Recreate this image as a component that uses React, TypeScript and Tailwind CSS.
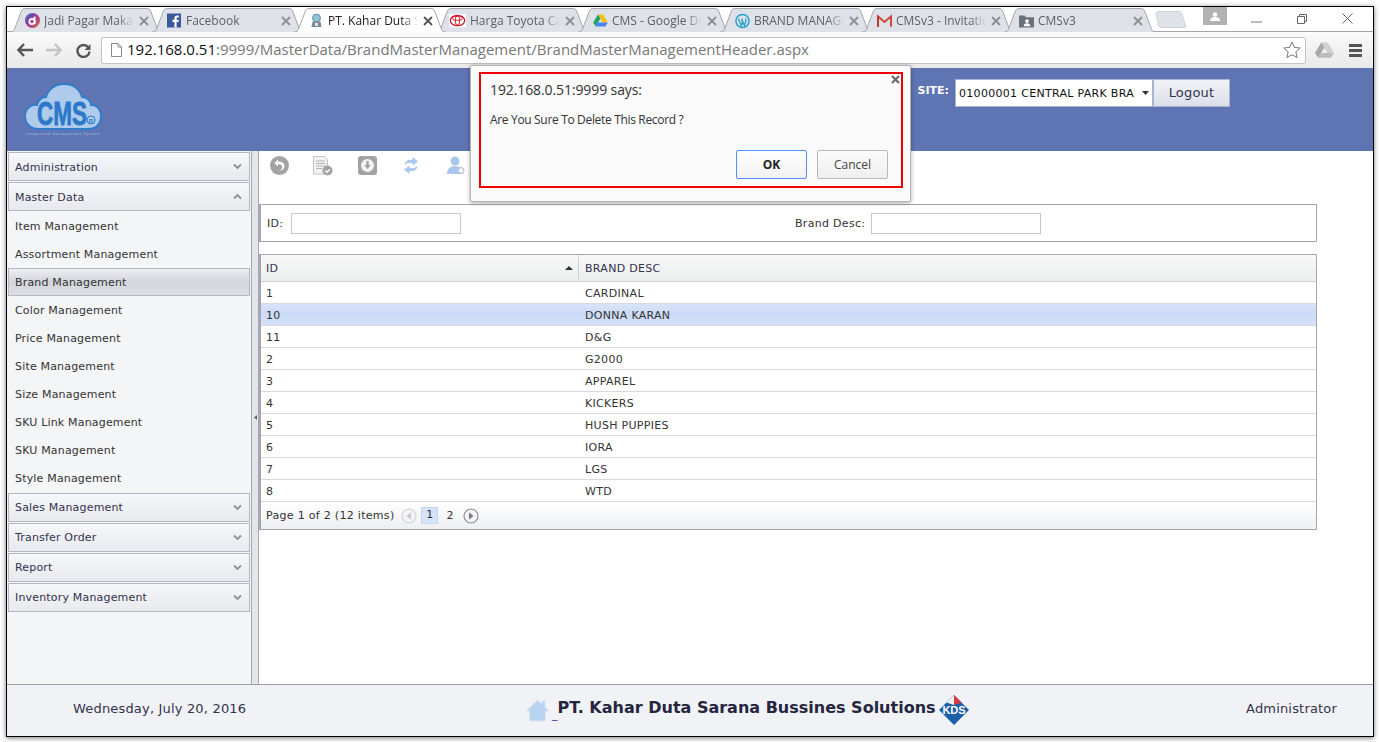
import type React from 'react'

const tabs = [
	{ title: 'Jadi Pagar Makan', icon: 'd' },
	{ title: 'Facebook', icon: 'fb' },
	{ title: 'PT. Kahar Duta Sarana', icon: 'pt', active: true },
	{ title: 'Harga Toyota Calya', icon: 'toyota' },
	{ title: 'CMS - Google Drive', icon: 'drive' },
	{ title: 'BRAND MANAGEMENT', icon: 'wp' },
	{ title: 'CMSv3 - Invitation', icon: 'gmail' },
	{ title: 'CMSv3', icon: 'folder' },
]

const rows = [
	['1', 'CARDINAL'],
	['10', 'DONNA KARAN'],
	['11', 'D&G'],
	['2', 'G2000'],
	['3', 'APPAREL'],
	['4', 'KICKERS'],
	['5', 'HUSH PUPPIES'],
	['6', 'IORA'],
	['7', 'LGS'],
	['8', 'WTD'],
]

const masterItems = [
	'Item Management',
	'Assortment Management',
	'Brand Management',
	'Color Management',
	'Price Management',
	'Site Management',
	'Size Management',
	'SKU Link Management',
	'SKU Management',
	'Style Management',
]

const TabIcon = ({ name }: { name: string }) => {
	if (name === 'd') {
		return (
			<svg width="15" height="15" viewBox="0 0 15 15">
				<defs>
					<linearGradient id="dg" x1="0" y1="0" x2="1" y2="1">
						<stop offset="0" stopColor="#2f6fd0" />
						<stop offset="0.5" stopColor="#a0359a" />
						<stop offset="1" stopColor="#e8702a" />
					</linearGradient>
				</defs>
				<circle cx="7.5" cy="7.5" r="7.5" fill="url(#dg)" />
				<circle cx="7" cy="8.5" r="2.6" fill="none" stroke="#fff" strokeWidth="1.8" />
				<path d="M9.6 3.5v7.5" stroke="#fff" strokeWidth="1.8" />
			</svg>
		)
	}
	if (name === 'fb') {
		return (
			<svg width="15" height="15" viewBox="0 0 15 15">
				<rect width="14" height="14" y="0.5" fill="#3b5998" />
				<path d="M9.6 14.5V9h1.9l.3-2.2H9.6V5.5c0-.7.2-1 1-1h1.2V2.6c-.3 0-.9-.1-1.600-.1-1.700 0-2.800 1-2.800 2.800v1.500H5.500V9h1.900v5.500z" fill="#fff" />
			</svg>
		)
	}
	if (name === 'pt') {
		return (
			<svg width="15" height="15" viewBox="0 0 15 15">
				<circle cx="7.500" cy="5" r="4" fill="#8fc4d8" stroke="#5b7f92" strokeWidth="0.8" />
				<path d="M3.500 8.500h8l1 5.500h-10z" fill="#7b8a94" />
				<path d="M6 10h3v3H6z" fill="#dfe9ee" />
			</svg>
		)
	}
	if (name === 'toyota') {
		return (
			<svg width="19" height="15" viewBox="0 0 19 15" className="-ml-[2px]">
				<rect width="19" height="15" fill="#fff" />
				<ellipse cx="9.500" cy="7.500" rx="8" ry="5.800" fill="none" stroke="#d8121f" strokeWidth="1.400" />
				<ellipse cx="9.500" cy="7.500" rx="2.400" ry="5.200" fill="none" stroke="#d8121f" strokeWidth="1.100" />
				<ellipse cx="9.500" cy="5" rx="5.500" ry="2.300" fill="none" stroke="#d8121f" strokeWidth="1.100" />
			</svg>
		)
	}
	if (name === 'drive') {
		return (
			<svg width="16" height="15" viewBox="0 0 16 15">
				<path d="M5.300 1h5.400l5.100 8.700h-5.400z" fill="#f4c20d" />
				<path d="M5.300 1 .2 9.700 2.800 14l5.100-8.700z" fill="#1ea362" />
				<path d="M2.800 14h10.400l2.600-4.300H5.400z" fill="#4285f4" />
			</svg>
		)
	}
	if (name === 'wp') {
		return (
			<svg width="16" height="16" viewBox="0 0 16 16">
				<circle cx="8" cy="8" r="7" fill="none" stroke="#21a0c9" strokeWidth="1.500" />
				<path d="M3.600 5.500 6.700 13l1.300-4-1-3M7 5.500 10 13l1.700-5.200c.4-1.200-.1-2-.6-2.500" fill="none" stroke="#21a0c9" strokeWidth="1.400" />
			</svg>
		)
	}
	if (name === 'gmail') {
		return (
			<svg width="16" height="14" viewBox="0 0 16 14">
				<path d="M1 13V2l7 6 7-6v11" fill="none" stroke="#d1453b" strokeWidth="2.200" />
				<path d="M1 13V2" stroke="#b83a30" strokeWidth="2.200" />
			</svg>
		)
	}
	return (
		<svg width="16" height="14" viewBox="0 0 16 14">
			<path d="M0 1h6l1.500 2H16v11H0z" fill="#6b7079" />
			<circle cx="8.500" cy="7" r="2" fill="#fff" />
			<path d="M5 12.500c0-2.200 1.500-3 3.500-3s3.500.8 3.500 3z" fill="#fff" />
		</svg>
	)
}

const Tab = ({ title, icon, active }: { title: string; icon: string; active?: boolean }) => (
	<div className={`relative -mr-[10px] flex h-[24px] w-[152px] shrink-0 items-center pl-[15px] pt-[1px] ${active ? 'z-10' : ''}`}>
		<svg className="absolute inset-0 h-full w-full" viewBox="0 0 152 24" preserveAspectRatio="none">
			<path
				d="M0 24C3 24 4 23 5 20L11 4C12 1 13 .5 16 .5H136C139 .5 140 1 141 4L147 20C148 23 149 24 152 24"
				fill={active ? '#ffffff' : '#dee1e7'}
				stroke="#a4a6ab"
				strokeWidth="1"
			/>
		</svg>
		<span className="relative flex w-[15px] items-center justify-center">
			<TabIcon name={icon} />
		</span>
		<span className={`relative ml-[4px] w-[90px] overflow-hidden whitespace-nowrap text-[12px] [mask-image:linear-gradient(to_right,black_82%,transparent)] ${active ? 'text-[#222]' : 'text-[#5c5f66]'}`}>
			{title}
		</span>
		<svg className="relative ml-[5px]" width="10" height="10" viewBox="0 0 10 10">
			<path d="M1 1l8 8M9 1L1 9" stroke={active ? '#555' : '#8b8d92'} strokeWidth="1.800" />
		</svg>
	</div>
)

const Chevron = ({ up }: { up?: boolean }) => (
	<svg width="9" height="7" viewBox="0 0 9 7">
		<path d={up ? 'M1 5.500l3.500-3.500L8 5.500' : 'M1 1.500l3.500 3.500L8 1.500'} fill="none" stroke="#8d9098" strokeWidth="1.800" />
	</svg>
)

const MenuHeader = ({ label, up, low }: { label: string; up?: boolean; low?: boolean }) => (
	<div className="flex h-[29px] items-center justify-between border border-[#b5b7c0] bg-gradient-to-b from-[#f6f7f9] to-[#e7e9ee] pl-[6px] pr-[7px] text-[#33334d]">
		<span className={low ? 'pt-[1px]' : 'pt-[3px]'}>{label}</span>
		<Chevron up={up} />
	</div>
)

const ToolIcons = () => (
	<div className="flex h-[53px] items-start gap-[24px] pl-[11px] pt-[5px]">
		<svg width="19" height="19" viewBox="0 0 19 19">
			<circle cx="9.500" cy="9.500" r="9.500" fill="#a3a3a5" />
			<path d="M8 3.500 4.500 7 8 10.500V8c2.500 0 4.200.8 4 3.500-.1 1.500-1 2.500-2.500 3.500 3.300-.5 5-2.500 5-5 0-3-2.500-4.500-6.500-4.500z" fill="#fff" />
		</svg>
		<svg width="20" height="20" viewBox="0 0 20 20">
			<path d="M.5.500h11l3 3V18H.5z" fill="#f2f2f3" stroke="#c2c2c5" />
			<path d="M3 5h9M3 7.500h9M3 10h9M3 12.500h6" stroke="#b4b4b8" />
			<circle cx="14.500" cy="14.500" r="5" fill="#a3a3a5" />
			<path d="M12.300 14.500l1.700 1.700 2.800-3" fill="none" stroke="#fff" strokeWidth="1.300" />
		</svg>
		<svg width="19" height="19" viewBox="0 0 19 19" className="ml-[1px]">
			<rect width="19" height="19" rx="3" fill="#a3a3a5" />
			<circle cx="9.500" cy="9.500" r="6.500" fill="#f4f4f4" />
			<path d="M8.300 5h2.400v4h2l-3.200 4-3.200-4h2z" fill="#a3a3a5" />
		</svg>
		<svg width="16" height="19" viewBox="0 0 16 19" className="ml-[2px]">
			<path d="M1.500 9C2 5 5 3 9.500 3.800V1l5.500 4.500L9.500 9.500V7C6.500 6.500 4 7 1.500 9z" fill="#a9c8ee" />
			<path d="M14.500 10c-.5 4-3.500 6-8 5.200V18L1 13.500 6.500 9.500V12c3 .5 5.500 0 8-2z" fill="#a9c8ee" />
		</svg>
		<svg width="18" height="19" viewBox="0 0 18 19" className="ml-[4px]">
			<circle cx="8" cy="5" r="4.500" fill="#a9c8ee" />
			<path d="M0 18c0-5 3-8 8-8s8 3 8 8z" fill="#a9c8ee" />
			<circle cx="14" cy="14.500" r="3" fill="#f1f4f9" stroke="#a9b6c8" />
		</svg>
	</div>
)

const AlertDialog = () => (
	<div className="absolute left-[463px] top-[58px] z-20 h-[137px] w-[441px] rounded-[2px] border border-[#b5b5b5] bg-[#fafafa] pb-[13px] pl-[8px] pr-[7px] pt-[6px] font-['Open_Sans',sans-serif] shadow-[0_1px_4px_rgba(0,0,0,0.35)]">
		<div className="relative h-[116px] border-2 border-[#ee0000] pl-[9px] pr-[13px] pt-[6px]">
			<svg className="absolute right-[1px] top-[1px]" width="9" height="9" viewBox="0 0 9 9">
				<path d="M1 1l7 7M8 1L1 8" stroke="#666" strokeWidth="2" />
			</svg>
			<p className="text-[14px] leading-[20px] tracking-[-0.1px] text-[#333]">192.168.0.51:9999 says:</p>
			<p className="mt-[11px] text-[12px] leading-[18px] tracking-[-0.33px] text-[#333]">Are You Sure To Delete This Record ?</p>
			<div className="mt-[21px] flex justify-end gap-[10px]">
				<button className="h-[29px] w-[71px] rounded-[2px] border border-[#4d90fe] bg-gradient-to-b from-[#ffffff] to-[#f1f1f1] text-[12px] font-bold text-[#222]">OK</button>
				<button className="h-[29px] w-[71px] rounded-[2px] border border-[#b8b8b8] bg-gradient-to-b from-[#fbfbfb] to-[#efefef] text-[12px] text-[#444]">Cancel</button>
			</div>
		</div>
	</div>
)

const CmsLogo = () => (
	<svg width="78" height="56" viewBox="0 0 78 56">
		<path
			d="M14 46C5 46 0 40 0 33 0 26 6 21 12 22 13 17 17 14 21 14 23 6 31 1 39 1 48 1 55 6 57 14 62 14 66 18 66 22 72 21 76 27 76 33 76 41 71 46 63 46Z"
			fill="#aecbec"
			stroke="#2f7ccb"
			strokeWidth="2"
		/>
		<text x="37" y="42" textAnchor="middle" fontFamily="Liberation Sans" fontWeight="700" fontSize="34" fill="#2c78c9" textLength="50" lengthAdjust="spacingAndGlyphs" stroke="#2c78c9" strokeWidth="0.8">
			CMS
		</text>
		<circle cx="66" cy="37" r="4" fill="none" stroke="#2c78c9" strokeWidth="1" />
		<text x="66" y="39.500" textAnchor="middle" fontFamily="Liberation Sans" fontWeight="700" fontSize="6" fill="#2c78c9">R</text>
		<text x="38" y="52" textAnchor="middle" fontFamily="DejaVu Sans" fontSize="3.500" fill="#9fc0ea" textLength="74">
			Integrated Management System
		</text>
	</svg>
)

const App: React.FC = () => {
	return (
		<div className="h-[742px] w-[1380px] overflow-hidden bg-white pl-[6px] pt-[6px] font-['DejaVu_Sans',sans-serif] text-[11px]">
			<div className="relative flex h-[731px] w-[1368px] flex-col border border-black bg-white shadow-[0_1px_5px_rgba(0,0,0,0.55)]">
				{/* tab strip */}
				<div className="flex h-[25px] shrink-0 items-end border-b border-[#a4a6ab] pl-[3px] font-['Open_Sans',sans-serif]">
					<div className="-mb-[1px] flex items-end">
						{tabs.map((tab) => (
							<Tab key={tab.title} title={tab.title} icon={tab.icon} active={tab.active} />
						))}
					</div>
					<svg className="mb-[3px] ml-[9px]" width="32" height="17" viewBox="0 0 32 17">
						<path d="M1 3C1 1 2 .5 4 .5H23C25 .5 26 1 27 3L31 16.500H7C5 16.500 4 16 3.500 14z" fill="#dfe3e9" stroke="#cfd2d7" />
					</svg>
					<div className="mb-[6px] ml-[16px] flex h-[18px] w-[24px] items-center justify-center self-start bg-[#b2b2b2]">
						<svg width="10" height="9" viewBox="0 0 10 9">
							<circle cx="5" cy="2.500" r="2.200" fill="#fff" />
							<path d="M0 9c0-3 2-4 5-4s5 1 5 4z" fill="#fff" />
						</svg>
					</div>
					<div className="mb-[1px] ml-[11px] flex flex-1 items-center self-stretch">
						<svg className="ml-[13px]" width="11" height="11" viewBox="0 0 11 11">
							<path d="M0 9h11" stroke="#777" />
						</svg>
						<svg className="ml-[35px]" width="10" height="10" viewBox="0 0 10 10">
							<path d="M.5 2.500h7v7h-7zM2.500 2.500V.5h7v7h-2" fill="none" stroke="#666" />
						</svg>
						<svg className="ml-[35px]" width="11" height="11" viewBox="0 0 11 11">
							<path d="M.5.500l10 10M10.500.5l-10 10" stroke="#666" />
						</svg>
					</div>
				</div>

				{/* browser toolbar */}
				<div className="flex h-[36px] shrink-0 items-center bg-gradient-to-b from-[#fbfbfb] to-[#e9e9e9] pl-[10px]">
					<svg width="16" height="14" viewBox="0 0 16 14">
						<path d="M7 1 1.500 7 7 13M2 7h14" fill="none" stroke="#555" strokeWidth="2.400" />
					</svg>
					<svg className="ml-[13px]" width="16" height="14" viewBox="0 0 16 14">
						<path d="M9 1l5.500 6L9 13M14 7H0" fill="none" stroke="#c3c3c3" strokeWidth="2.400" />
					</svg>
					<svg className="ml-[14px]" width="15" height="15" viewBox="0 0 15 15">
						<path d="M12.300 4.300A6 6 0 1 0 13.500 8.500" fill="none" stroke="#555" strokeWidth="2.400" />
						<path d="M14.500 1v6h-6z" fill="#555" />
					</svg>
					<div className="ml-[10px] flex h-[27px] w-[1205px] items-center rounded-[2px] border border-[#c4c4c4] bg-white pl-[9px] pr-[4px] font-['Open_Sans',sans-serif] text-[15px]">
						<svg width="11" height="14" viewBox="0 0 11 14">
							<path d="M.5.500h6.500l3.500 3.500v9.500H.5zM7 .5V4h3.500" fill="#fff" stroke="#8a8a8a" />
						</svg>
						<span className="-mt-[1px] ml-[5px] whitespace-nowrap text-[#777]">
							<span className="text-[#111]">192.168.0.51</span>:9999/MasterData/BrandMasterManagement/BrandMasterManagementHeader.aspx
						</span>
						<svg className="ml-auto" width="18" height="18" viewBox="0 0 18 18">
							<path d="M9 1l2.400 5.400 5.800.6-4.400 3.900 1.300 5.700L9 13.700l-5.100 2.900 1.300-5.700L.8 7l5.800-.6z" fill="#fff" stroke="#777" strokeWidth="1" />
						</svg>
					</div>
					<svg className="ml-[9px]" width="19" height="16" viewBox="0 0 19 16">
						<path d="M6.200.5h6.600l6 10.500h-6.600z" fill="#d0d0d0" />
						<path d="M6.200.5 0 11l3.200 4.800L9.400 5.500z" fill="#a8a8a8" />
						<path d="M3.200 15.800h12.600L19 11H6.400z" fill="#bcbcbc" />
					</svg>
					<div className="ml-[15px] flex w-[13px] flex-col gap-[2px]">
						<span className="h-[3px] bg-[#555]" />
						<span className="h-[3px] bg-[#555]" />
						<span className="h-[3px] bg-[#555]" />
					</div>
				</div>

				{/* page header */}
				<div className="flex h-[83px] shrink-0 justify-between bg-[#5f74b2] pl-[18px] pr-[143px] pt-[11px]">
					<div className="pt-[4px]">
						<CmsLogo />
					</div>
					<div className="flex h-[28px] items-start">
						<span className="mr-[6px] mt-[4px] font-bold text-white">SITE:</span>
						<div className="flex h-[28px] w-[198px] items-center border border-[#a8b3d2] bg-white pl-[3px] pr-[3px] text-[#111]">
							<span className="w-[176px] overflow-hidden whitespace-nowrap pt-[2px] tracking-[0.3px]">01000001 CENTRAL PARK BRANCH</span>
							<svg className="ml-auto" width="7" height="4" viewBox="0 0 7 4">
								<path d="M0 0h7L3.500 4z" fill="#333" />
							</svg>
						</div>
						<button className="h-[28px] w-[77px] border border-[#a8b3d2] bg-gradient-to-b from-[#f2f3f7] to-[#dcdfe8] text-[13px] tracking-[0.2px] text-[#33334d]">Logout</button>
					</div>
				</div>

				<AlertDialog />

				{/* body */}
				<div className="flex min-h-0 flex-1 text-[#333]">
					<aside className="flex w-[245px] shrink-0 flex-col gap-[1px] border-r border-[#a5a7b0] bg-[#f4f5f7] px-[1px] pt-[1px] tracking-[0.18px]">
						<MenuHeader label="Administration" />
						<MenuHeader label="Master Data" up />
						<div className="flex flex-col">
							{masterItems.map((item) =>
								item === 'Brand Management' ? (
									<div key={item} className="flex h-[28px] items-center border border-[#b5b7c0] bg-gradient-to-b from-[#eeeff2] via-[#d3d5dc] to-[#dcdee3] pl-[6px] pt-[2px]">
										{item}
									</div>
								) : (
									<div key={item} className="flex h-[28px] items-center pl-[7px] pt-[2px]">
										{item}
									</div>
								),
							)}
						</div>
						<MenuHeader label="Sales Management" low />
						<MenuHeader label="Transfer Order" low />
						<MenuHeader label="Report" low />
						<MenuHeader label="Inventory Management" low />
					</aside>

					<div className="flex w-[7px] shrink-0 items-center justify-center rounded-b-[2px] border-r border-[#a5a7b0] bg-[#e3e5ea]">
						<svg width="3" height="5" viewBox="0 0 3 5">
							<path d="M3 0v5L0 2.500z" fill="#666" />
						</svg>
					</div>

					<main className="w-[1058px] shrink-0">
						<ToolIcons />

						<div className="flex h-[38px] items-center border border-l-2 border-[#a5a7b0] bg-white pl-[6px]">
							<div className="flex w-[528px] items-center">
								<span className="pt-[2px] tracking-[0.3px]">ID:</span>
								<input className="ml-[8px] h-[21px] w-[170px] border border-[#c9c9c9] bg-white" />
							</div>
							<span className="pt-[2px] tracking-[0.3px]">Brand Desc:</span>
							<input className="ml-[6px] h-[21px] w-[170px] border border-[#c9c9c9] bg-white" />
						</div>

						<div className="mt-[12px] border border-l-2 border-[#a5a7b0] tracking-[0.3px]">
							<div className="flex h-[27px] border-b border-[#cfd0d8] bg-gradient-to-b from-[#f8f8f9] to-[#eceded] text-[#33334d]">
								<div className="flex w-[318px] items-center justify-between border-r border-[#cfd0d8] pl-[5px] pr-[5px]">
									<span className="pt-[2px]">ID</span>
									<svg width="8" height="4" viewBox="0 0 8 4">
										<path d="M4 0l4 4H0z" fill="#333" />
									</svg>
								</div>
								<div className="flex items-center pl-[6px] pt-[2px]">BRAND DESC</div>
							</div>
							{rows.map(([id, desc]) => (
								<div
									key={id}
									className={`flex h-[22px] items-center border-b border-[#d8d9e0] pt-[4px] ${id === '10' ? 'bg-gradient-to-b from-[#d8e3f9] via-[#cbdaf8] to-[#d6e2f9]' : 'bg-white'}`}
								>
									<div className="w-[318px] pl-[5px]">{id}</div>
									<div className="pl-[6px]">{desc}</div>
								</div>
							))}
							<div className="flex h-[27px] items-center bg-gradient-to-b from-[#ffffff] to-[#eeeff2] pl-[5px]">
								<span className="pt-[2px]">Page 1 of 2 (12 items)</span>
								<svg className="ml-[7px]" width="16" height="16" viewBox="0 0 16 16">
									<circle cx="8" cy="8" r="7" fill="#f4f4f6" stroke="#d3d3d6" strokeWidth="1.200" />
									<path d="M10 4.500v7L5.500 8z" fill="#c9c9cc" />
								</svg>
								<span className="ml-[4px] flex h-[17px] w-[17px] items-center justify-center border border-[#c5d6f5] bg-[#d6e3f9]">1</span>
								<span className="ml-[8px] pt-[2px]">2</span>
								<svg className="ml-[9px]" width="16" height="16" viewBox="0 0 16 16">
									<circle cx="8" cy="8" r="7" fill="#f4f4f6" stroke="#8f8f94" strokeWidth="1.200" />
									<path d="M6 4.500v7L10.500 8z" fill="#77777c" />
								</svg>
							</div>
						</div>
					</main>
				</div>

				{/* footer */}
				<div className="flex h-[52px] shrink-0 items-center border-t border-[#9a9ba3] bg-[#f0f2f5] text-[#33334d]">
					<span className="ml-[66px] w-[453px] pb-[4px] text-[13px] tracking-[0.18px]">Wednesday, July 20, 2016</span>
					<svg width="23" height="23" viewBox="0 0 23 23">
						<path d="M11.500 1 0 12h3.500v10h16V12H23l-4-4V2h-3v3z" fill="#b9d3f2" stroke="#dfe6ee" strokeWidth="0.800" />
					</svg>
					<span className="ml-[3px] self-center pt-[9px] text-[#4b2a9a]">_</span>
					<span className="-mt-[5px] whitespace-nowrap text-[16px] font-bold text-[#25253f]">PT. Kahar Duta Sarana Bussines Solutions</span>
					<svg className="-mt-[2px] ml-[3px]" width="30" height="30" viewBox="0 0 30 30">
						<path d="M15 0 30 15 15 30 0 15z" fill="#1d5ea8" />
						<path d="M15 0 22.500 7.500 15 10z" fill="#dc3a3a" />
						<path d="M15 0 7.500 7.500 15 10z" fill="#e9eef5" />
						<text x="15" y="19" textAnchor="middle" fontFamily="Liberation Sans" fontWeight="700" fontSize="11" fill="#fff">KDS</text>
					</svg>
					<span className="ml-auto mr-[36px] pb-[4px] text-[13px] tracking-[0.18px]">Administrator</span>
				</div>
			</div>
		</div>
	)
}

export default App
